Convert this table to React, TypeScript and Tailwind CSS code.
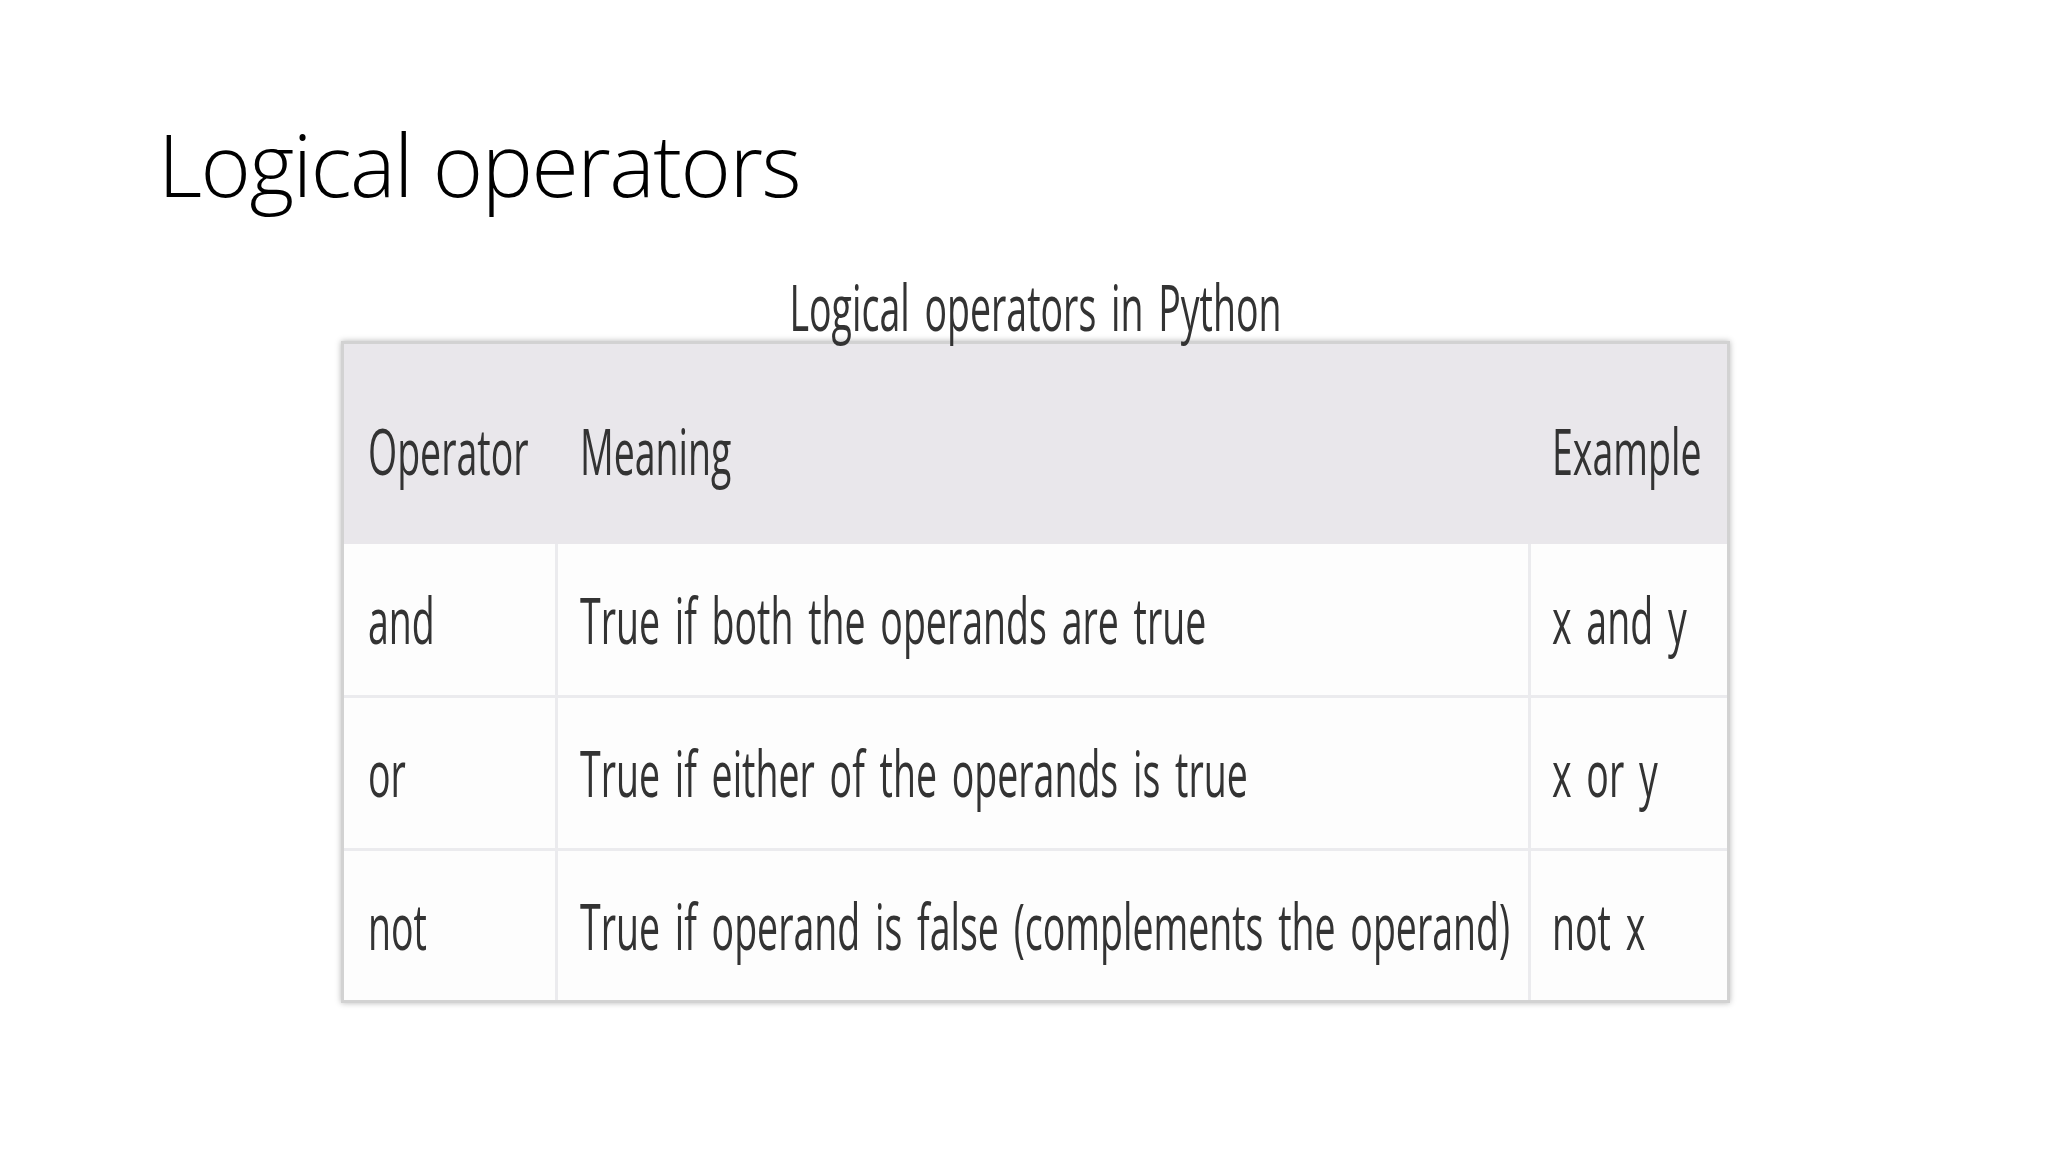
const rows = [
  { op: 'and', meaning: 'True if both the operands are true', example: 'x and y', h: 'h-[151px]' },
  { op: 'or', meaning: 'True if either of the operands is true', example: 'x or y', h: 'h-[153px]' },
  { op: 'not', meaning: 'True if operand is false (complements the operand)', example: 'not x', h: 'h-[152px]' },
];

// the table in the slide is a vertically stretched screenshot, so text is scaled on y
function Txt({ children }: { children: React.ReactNode }) {
  return (
    <span className="inline-block whitespace-nowrap text-[37.5px] leading-none [word-spacing:5px] text-[#333333] scale-y-[1.72] font-['Open_Sans',sans-serif]">
      {children}
    </span>
  );
}

export default function App() {
  return (
    <div className="w-[2048px] h-[1152px] bg-white flex flex-col overflow-hidden">
      <h1 className="mt-[121px] ml-[158px] text-[86px] leading-none font-light tracking-[-1.5px] text-black font-['Open_Sans',sans-serif]">
        Logical operators
      </h1>

      <div className="mt-[81px] ml-[341px] w-[1389px] flex flex-col">
        <div className="h-[38.5px] flex justify-center mb-[14.5px]">
          <Txt>Logical operators in Python</Txt>
        </div>

        <div className="border-[3px] border-[#d2d2d2] shadow-[0_0_6px_rgba(0,0,0,0.28)] flex flex-col">
          {/* header */}
          <div className="h-[200px] bg-[#e9e7eb] flex items-center pt-[14px]">
            <div className="w-[214px] pl-[24px]"><Txt>Operator</Txt></div>
            <div className="w-[973px] pl-[22px]"><Txt>Meaning</Txt></div>
            <div className="w-[196px] pl-[21px]"><Txt>Example</Txt></div>
          </div>

          {rows.map((r, i) => (
            <div
              key={r.op}
              className={`${r.h} bg-[#fdfdfd] flex ${i > 0 ? 'border-t-[3px] border-[#ebebee]' : ''}`}
            >
              <div className="w-[214px] pl-[24px] flex items-center border-r-[3px] border-[#ebebee]">
                <Txt>{r.op}</Txt>
              </div>
              <div className="w-[973px] pl-[22px] flex items-center border-r-[3px] border-[#ebebee]">
                <Txt>{r.meaning}</Txt>
              </div>
              <div className="w-[196px] pl-[21px] flex items-center">
                <Txt>{r.example}</Txt>
              </div>
            </div>
          ))}
        </div>
      </div>
    </div>
  );
}
